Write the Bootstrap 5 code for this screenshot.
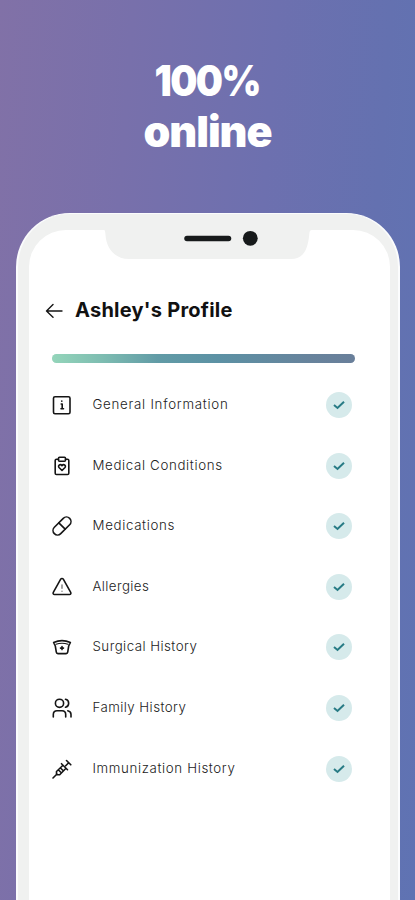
<!DOCTYPE html>
<html lang="en">
<head>
<meta charset="utf-8">
<meta name="viewport" content="width=device-width, initial-scale=1">
<title>Ashley's Profile</title>
<link href="https://cdn.jsdelivr.net/npm/bootstrap@5.3.0/dist/css/bootstrap.min.css" rel="stylesheet">
<style>
  body { font-family: Inter, "Open Sans", sans-serif; height: 900px; background: linear-gradient(94deg, #8171a7 0%, #7870ab 28%, #6d70af 58%, #6471b0 82%, #5f73b3 100%); }
  .hero { height: 213px; padding-top: 55px; }
  .hero h1 { font-size: 43px; font-weight: 900; line-height: 50.5px; }
  .hero-a { display: inline-block; letter-spacing: -1.8px; transform: scaleX(.89); }
  .hero-b { letter-spacing: -1px; }
  .phone { width: 384px; height: 687px; margin-left: 16px; padding: 16px 8px 0 11px; border: solid #fbfcfd; border-width: 1px 2px 0; border-radius: 54px 54px 0 0; background: #f0f1f0; }
  .screen { border-radius: 37px 37px 0 0; background: #fff; }
  .notch { margin-left: 75px; }
  .title-row { height: 24px; margin-top: 39px; padding-left: 16px; gap: 12px; }
  .title-row h2 { font-size: 20px; font-weight: 700; letter-spacing: .25px; color: #111; }
  .bar { height: 9px; width: 303px; margin: 32px 0 12px 23px; border-radius: 5px; }
  .bar .progress-bar { background: linear-gradient(90deg, #94d5ba 0%, #7dbcb1 17%, #619ba6 35%, #5c91a4 55%, #67839c 85%, #697f9a 100%); }
  .entry { height: 60.55px; padding: 0 38px 0 22px; }
  .entry svg { flex: none; }
  .label { margin-left: 19.5px; padding-bottom: 2px; font-size: 13.3px; font-weight: 300; color: #222; line-height: 18px; }
  .l1 { letter-spacing: .73px; }
  .l2 { letter-spacing: .64px; }
  .l3 { letter-spacing: .66px; }
  .l4 { letter-spacing: .4px; }
  .l5 { letter-spacing: .45px; }
  .l6 { letter-spacing: .43px; }
  .l7 { letter-spacing: .63px; }
  .tick { width: 26px; height: 26px; background: #d6eaeb; }
  .line-icon { fill: none; stroke: #151515; stroke-width: 1.6; stroke-linecap: round; stroke-linejoin: round; }
</style>
</head>
<body class="overflow-hidden">
<header class="hero text-center text-white">
  <h1 class="m-0"><span class="hero-a">100%</span><br><span class="hero-b">online</span></h1>
</header>
<main class="phone">
  <div class="screen h-100">
    <svg class="notch d-block" width="208" height="29" viewBox="0 0 208 29">
      <path fill="#f0f1f0" d="M0 0h208c-2 0-2.500 1.500-2.700 4C204 20 199 29 187 29H25C11 29 2.500 19 1.500 5 1.300 2 1 0 0 0z"/>
      <path d="M83 8.500h41.500" stroke="#171a1b" stroke-width="5.500" stroke-linecap="round"/>
      <circle cx="146.300" cy="8.300" r="7.400" fill="#171a1b"/>
    </svg>
    <div class="title-row d-flex align-items-center">
      <svg class="line-icon" width="18" height="16" viewBox="0 0 18 16"><path stroke-width="1.400" d="M17 9H1.500M8 2.500 1.500 9 8 15.300"/></svg>
      <h2 class="m-0">Ashley's Profile</h2>
    </div>
    <div class="bar progress"><div class="progress-bar w-100"></div></div>
    <div class="list-unstyled">
      <div class="entry d-flex align-items-center">
        <svg class="line-icon" width="22" height="22" viewBox="0 0 22 22"><rect x="2.500" y="2.700" width="16.500" height="17" rx="1.500"/><path d="M10.200 10h1v4.800M10 14.800h2.500M10.800 7.100v.2"/></svg>
        <span class="label l1">General Information</span><span class="tick rounded-circle ms-auto d-flex align-items-center justify-content-center"><svg width="12" height="10" viewBox="0 0 12 10"><path d="M1 5l3.500 3L11 1.700" fill="none" stroke="#287b85" stroke-width="2"/></svg></span>
      </div>
      <div class="entry d-flex align-items-center">
        <svg class="line-icon" width="22" height="22" viewBox="0 0 22 22"><path d="M7.500 4.200H5.500q-1.300 0-1.300 1.300v12.700q0 1.300 1.300 1.300h11q1.300 0 1.300-1.300V5.500q0-1.300-1.300-1.300h-2"/><rect x="7.500" y="2.200" width="7" height="4" rx="1"/><path d="M11 15.500 8 12.500c-1.500-2.200 1.500-4 3-1.800 1.500-2.200 4.500-.4 3 1.800z"/></svg>
        <span class="label l2">Medical Conditions</span><span class="tick rounded-circle ms-auto d-flex align-items-center justify-content-center"><svg width="12" height="10" viewBox="0 0 12 10"><path d="M1 5l3.500 3L11 1.700" fill="none" stroke="#287b85" stroke-width="2"/></svg></span>
      </div>
      <div class="entry d-flex align-items-center">
        <svg class="line-icon" width="22" height="22" viewBox="0 0 22 22"><g transform="rotate(-45 11 11)"><rect x=".2" y="6.500" width="21.600" height="9" rx="4.500"/><path d="M11 6.500v9"/></g></svg>
        <span class="label l3">Medications</span><span class="tick rounded-circle ms-auto d-flex align-items-center justify-content-center"><svg width="12" height="10" viewBox="0 0 12 10"><path d="M1 5l3.500 3L11 1.700" fill="none" stroke="#287b85" stroke-width="2"/></svg></span>
      </div>
      <div class="entry d-flex align-items-center">
        <svg class="line-icon" width="22" height="22" viewBox="0 0 22 22"><path d="M9.700 3.200 2.300 16.400c-.6 1.200.1 2.100 1.200 2.100h15c1.100 0 1.800-.9 1.200-2.100L12.300 3.200c-.6-1-2-1-2.600 0z"/><path stroke-width="1.200" stroke="#666" d="M11 8.800v3.500M11 15v.3"/></svg>
        <span class="label l4">Allergies</span><span class="tick rounded-circle ms-auto d-flex align-items-center justify-content-center"><svg width="12" height="10" viewBox="0 0 12 10"><path d="M1 5l3.500 3L11 1.700" fill="none" stroke="#287b85" stroke-width="2"/></svg></span>
      </div>
      <div class="entry d-flex align-items-center">
        <svg class="line-icon" width="22" height="22" viewBox="0 0 22 22"><path d="M4.300 10 2.600 6.500Q11 2.800 19.400 6.500L17.700 10l-1 6.200q-.2 1.400-1.600 1.400H6.900q-1.400 0-1.600-1.400z"/><path stroke-width="1.200" d="M5 8.200Q11 6.300 17 8.200"/><path d="M11 10.600v3M9.500 12.100h3"/></svg>
        <span class="label l5">Surgical History</span><span class="tick rounded-circle ms-auto d-flex align-items-center justify-content-center"><svg width="12" height="10" viewBox="0 0 12 10"><path d="M1 5l3.500 3L11 1.700" fill="none" stroke="#287b85" stroke-width="2"/></svg></span>
      </div>
      <div class="entry d-flex align-items-center">
        <svg class="line-icon" width="22" height="22" viewBox="0 0 22 22"><circle cx="8.500" cy="6.300" r="4.100"/><path d="M2.300 20v-2.500c0-2.500 1.500-3.800 3.700-3.800h5c2.200 0 3.700 1.300 3.700 3.800V20M14.500 2.300c4.200.8 4.200 7.200 0 8M16.800 13.800c2 .5 3.200 1.800 3.200 3.700V20"/></svg>
        <span class="label l6">Family History</span><span class="tick rounded-circle ms-auto d-flex align-items-center justify-content-center"><svg width="12" height="10" viewBox="0 0 12 10"><path d="M1 5l3.500 3L11 1.700" fill="none" stroke="#287b85" stroke-width="2"/></svg></span>
      </div>
      <div class="entry d-flex align-items-center">
        <svg class="line-icon" width="22" height="22" viewBox="0 0 22 22"><path d="M2 20l4-4M15.500 2.500l4.300 4.300M17.700 4.700l-3 3M10.500 5.700l6 6M12 7.200l-6.500 6.300L5.500 16.500l3.200.2L15 10.200M9.500 10l2 2M7.500 12l2 2"/></svg>
        <span class="label l7">Immunization History</span><span class="tick rounded-circle ms-auto d-flex align-items-center justify-content-center"><svg width="12" height="10" viewBox="0 0 12 10"><path d="M1 5l3.500 3L11 1.700" fill="none" stroke="#287b85" stroke-width="2"/></svg></span>
      </div>
    </div>
  </div>
</main>
<script src="https://cdn.jsdelivr.net/npm/bootstrap@5.3.0/dist/js/bootstrap.bundle.min.js"></script>
</body>
</html>
